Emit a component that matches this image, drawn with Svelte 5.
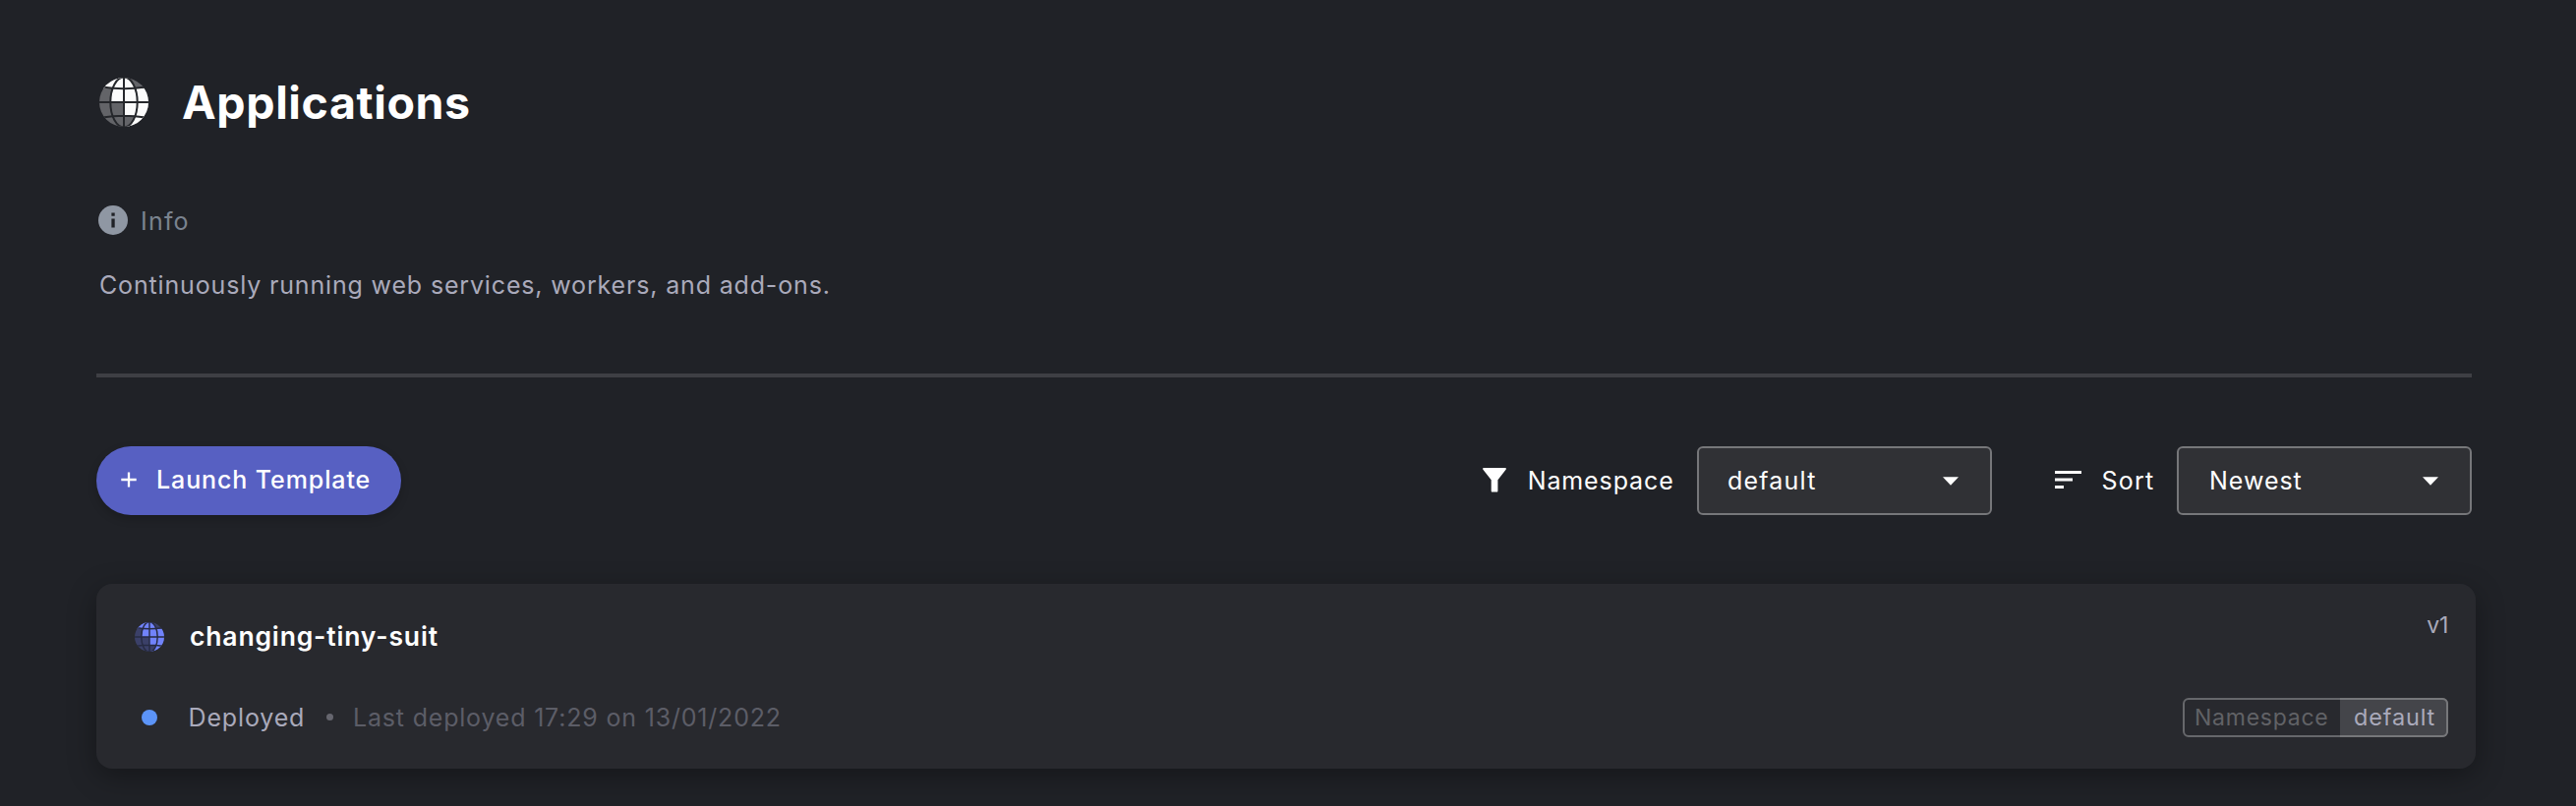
<script>
  const app = {
    name: 'changing-tiny-suit',
    status: 'Deployed',
    deployed: 'Last deployed 17:29 on 13/01/2022',
    version: 'v1',
    namespace: 'default'
  };
</script>

{#snippet globe(id, size, bright, dim, line, stroke)}
  <svg class="globe" width={size} height={size} viewBox="0 0 50 50">
    <defs>
      <clipPath id="{id}-disc"><circle cx="25" cy="25" r="25" /></clipPath>
      <clipPath id="{id}-core"><ellipse cx="25" cy="25" rx="13.7" ry="25.5" /></clipPath>
    </defs>
    <g clip-path="url(#{id}-disc)">
      <rect width="50" height="50" fill={dim} />
      <rect width="25" height="11" fill={bright} />
      <rect x="25" y="11" width="25" height="39" fill={bright} />
      <g clip-path="url(#{id}-core)">
        <rect width="50" height="25" fill={bright} />
        <rect y="39" width="50" height="11" fill={dim} />
      </g>
      <g fill="none" stroke={line} stroke-width={stroke}>
        <ellipse cx="25" cy="25" rx="13.7" ry="25.5" />
        <path d="M25 0V50M0 25H50M3 9.5Q25 12.8 47 9.5M3 40.5Q25 37.2 47 40.5" />
      </g>
    </g>
  </svg>
{/snippet}

{#snippet caret()}
  <svg width="16" height="9" viewBox="0 0 16 9"><path d="M0 0.3H16L8 8.8Z" fill="#fff" /></svg>
{/snippet}

<main class="page">
  <header class="heading">
    {@render globe('head', 50, '#fbfbfb', '#636468', '#25272b', 2)}
    <h1>Applications</h1>
  </header>

  <div class="info">
    <svg width="30" height="30" viewBox="0 0 30 30">
      <circle cx="15" cy="15" r="15" fill="#8f97a3" />
      <path d="M13.4 7.6h3.3v3.2h-3.3zM13.4 13.4h3.3v9.2h-3.3z" fill="#202227" />
    </svg>
    <span>Info</span>
  </div>
  <p class="description">Continuously running web services, workers, and add-ons.</p>
  <div class="divider"></div>

  <div class="controls">
    <button class="launch">
      <svg width="16" height="16" viewBox="0 0 16 16"><path d="M8 .5V15.5M.3 8H15.7" stroke="#fff" stroke-width="2.3" /></svg>
      <span>Launch Template</span>
    </button>
    <div class="filters">
      <div class="filter">
        <svg class="funnel" width="24" height="25" viewBox="0 0 24 25"><path d="M1 0H23Q24.4 .3 23.6 1.8L15.4 12.3V23.4Q15.4 24.6 14.2 24.6H9.9Q8.7 24.6 8.7 23.4V12.3L.4 1.8Q-.4 .3 1 0Z" fill="#fff" /></svg>
        <span class="label namespace-label">Namespace</span>
        <div class="select namespace-select"><span>default</span>{@render caret()}</div>
      </div>
      <div class="filter">
        <svg class="sort" width="27" height="18" viewBox="0 0 27 18"><path d="M0 0H27V3H0ZM0 7.5H18V10.5H0ZM0 15H9V18H0Z" fill="#fff" /></svg>
        <span class="label sort-label">Sort</span>
        <div class="select sort-select"><span>Newest</span>{@render caret()}</div>
      </div>
    </div>
  </div>

  <article class="card">
    <div class="summary">
      <div class="title">
        {@render globe('app', 30, '#7183fb', '#3b4068', '#272b43', 2.4)}
        <h2>{app.name}</h2>
      </div>
      <div class="status">
        <span class="dot"></span>
        <span class="state">{app.status}</span>
        <span class="bullet"></span>
        <span class="time">{app.deployed}</span>
      </div>
    </div>
    <div class="meta">
      <span class="version">{app.version}</span>
      <div class="tag">
        <span class="tag-key">Namespace</span>
        <span class="tag-value">{app.namespace}</span>
      </div>
    </div>
  </article>
</main>

<style>
  :global(body) {
    background: #202227;
    overflow: hidden;
  }
  * {
    box-sizing: border-box;
  }
  svg {
    display: block;
    flex: none;
  }
  .page {
    height: 820px;
    padding: 79px 106px 0 98px;
    font-family: Inter, 'Open Sans', sans-serif;
    font-size: 25px;
    line-height: 30px;
    color: #fff;
    white-space: nowrap;
    overflow: hidden;
  }
  .heading {
    display: flex;
    gap: 34px;
    height: 50px;
    padding-left: 3px;
  }
  h1 {
    margin: 0;
    font-size: 46.5px;
    line-height: 50px;
    font-weight: 700;
    letter-spacing: 0.6px;
  }
  .info {
    display: flex;
    gap: 13px;
    margin-top: 80px;
    padding-left: 2px;
    height: 30px;
    color: #7a838f;
    letter-spacing: 1.2px;
  }
  .info span {
    padding-top: 1px;
  }
  .description {
    margin: 36px 0 0 3px;
    color: #aaaabb;
    letter-spacing: 0.84px;
  }
  .divider {
    height: 4px;
    margin-top: 75px;
    background: #3e3f44;
  }
  .controls {
    display: flex;
    justify-content: space-between;
    height: 70px;
    margin-top: 70px;
  }
  .launch {
    display: flex;
    align-items: center;
    gap: 20px;
    width: 310px;
    height: 70px;
    padding: 0 0 3px 25px;
    border: 0;
    border-radius: 35px;
    background: #5760c2;
    box-shadow: 0 4px 10px #00000030;
    color: #fff;
    font: 550 25px/30px Inter, 'Open Sans', sans-serif;
    letter-spacing: 0.9px;
  }
  .launch svg {
    margin-top: 1px;
  }
  .filters {
    display: flex;
    gap: 64px;
  }
  .filter {
    display: flex;
    align-items: center;
  }
  .funnel {
    margin-right: 21.7px;
    margin-bottom: 2px;
  }
  .namespace-label {
    width: 172.3px;
    letter-spacing: 0.88px;
  }
  .sort {
    margin-right: 20.5px;
    margin-bottom: 2px;
  }
  .sort-label {
    width: 76.5px;
    letter-spacing: 1.25px;
  }
  .select {
    display: flex;
    align-items: center;
    justify-content: space-between;
    width: 300px;
    height: 70px;
    padding: 0 32px 0 29px;
    border: 2px solid #76777a;
    border-radius: 6px;
    background: #303135;
    letter-spacing: 1.2px;
  }
  .sort-select {
    padding-left: 31px;
    letter-spacing: 0.97px;
  }
  .card {
    display: flex;
    justify-content: space-between;
    height: 188px;
    margin: 70px -4px 0 0;
    padding: 26px 28px 32px 39px;
    border-radius: 16px;
    background: #28292e;
    box-shadow: 0 8px 30px #00000055;
  }
  .summary,
  .meta {
    display: flex;
    flex-direction: column;
    justify-content: space-between;
  }
  .title {
    display: flex;
    align-items: center;
    gap: 26px;
    height: 56px;
  }
  h2 {
    margin: 0 0 3px;
    font-size: 26.5px;
    font-weight: 600;
    letter-spacing: 0.84px;
  }
  .status {
    display: flex;
    align-items: center;
    height: 40px;
    padding-left: 7px;
  }
  .dot {
    width: 16px;
    height: 16px;
    margin-right: 31.5px;
    border-radius: 50%;
    background: #5c94f8;
  }
  .state {
    width: 140px;
    padding-bottom: 1px;
    color: #aaaabb;
    letter-spacing: 0.85px;
  }
  .bullet {
    width: 7px;
    height: 7px;
    margin: 0 20.5px 2px 0;
    border-radius: 50%;
    background: #66666f;
  }
  .time {
    padding-bottom: 1px;
    color: #5c5d67;
    letter-spacing: 0.81px;
  }
  .meta {
    align-items: flex-end;
    font-size: 23px;
  }
  .version {
    padding-top: 1px;
    color: #aaaabb;
    letter-spacing: -0.3px;
  }
  .tag {
    display: flex;
    width: 270px;
    height: 40px;
    border: 2px solid #66676b;
    border-radius: 6px;
    line-height: 36px;
  }
  .tag-key {
    width: 158px;
    padding-left: 10px;
    color: #616266;
    letter-spacing: 0.75px;
  }
  .tag-value {
    width: 110px;
    height: 40px;
    margin: -2px -2px -2px 0;
    padding: 0 0 0 14px;
    border: 2px solid #76777a;
    border-left: 0;
    border-radius: 0 6px 6px 0;
    background: #44454a;
    color: #aaaabb;
    font-size: 23.5px;
    letter-spacing: 0.83px;
  }
</style>
